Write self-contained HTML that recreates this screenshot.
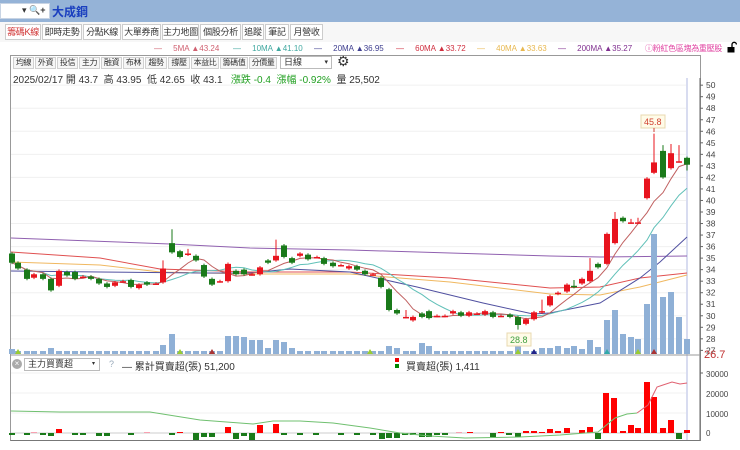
<!DOCTYPE html>
<html><head><meta charset="utf-8"><style>
*{margin:0;padding:0;box-sizing:border-box}
body{width:740px;height:450px;overflow:hidden;background:#fff;font-family:"Liberation Sans","Noto Sans CJK TC",sans-serif;position:relative;color:#333}
.a{position:absolute;white-space:nowrap}
.tab{position:absolute;top:24px;height:16px;border:1px solid #ccc;background:#fff;font-size:9px;line-height:14px;text-align:center;color:#333;white-space:nowrap;overflow:hidden;letter-spacing:-0.3px}
.btn{position:absolute;top:57px;height:12px;border:1px solid #d0d0d0;background:#f6f6f6;font-size:8px;line-height:10px;text-align:center;color:#333;white-space:nowrap;overflow:hidden;letter-spacing:-0.4px}
.lg{position:absolute;top:44px;font-size:8px;white-space:nowrap}
</style></head><body>
<div class="a" style="left:0;top:0;width:740px;height:22px;background:#95b3d7"></div>
<div class="a" style="left:0;top:3px;width:50px;height:16px;background:#fff;border:1px solid #c8d4e4"></div>
<div class="a" style="left:22px;top:5px;font-size:9px;color:#333">▾ <span style="color:#557">🔍</span><b>+</b></div>
<div class="a" style="left:52px;top:3px;font-size:12px;font-weight:bold;color:#1a3fbf">大成鋼</div>
<div class="a" style="left:0;top:22px;width:740px;height:20px;background:#f7f7f7"></div>
<div class="tab" style="left:5px;width:36px;color:#d03030">籌碼K線</div>
<div class="tab" style="left:42px;width:40px">即時走勢</div>
<div class="tab" style="left:83px;width:38px">分點K線</div>
<div class="tab" style="left:122px;width:39px">大單券商</div>
<div class="tab" style="left:162px;width:37px">主力地圖</div>
<div class="tab" style="left:200px;width:41px">個股分析</div>
<div class="tab" style="left:242px;width:22px">追蹤</div>
<div class="tab" style="left:265px;width:24px">筆記</div>
<div class="tab" style="left:290px;width:33px">月營收</div>
<div class="lg" style="left:154px;color:#d06070">—&nbsp;&nbsp;&nbsp;&nbsp; 5MA ▲43.24</div>
<div class="lg" style="left:233px;color:#40a8a0">—&nbsp;&nbsp;&nbsp;&nbsp; 10MA ▲41.10</div>
<div class="lg" style="left:314px;color:#404090">—&nbsp;&nbsp;&nbsp;&nbsp; 20MA ▲36.95</div>
<div class="lg" style="left:396px;color:#d03040">—&nbsp;&nbsp;&nbsp;&nbsp; 60MA ▲33.72</div>
<div class="lg" style="left:477px;color:#e8b850">—&nbsp;&nbsp;&nbsp;&nbsp; 40MA ▲33.63</div>
<div class="lg" style="left:558px;color:#803090">—&nbsp;&nbsp;&nbsp;&nbsp; 200MA ▲35.27</div>
<div class="a" style="left:645px;top:43px;font-size:8px;color:#e040a0;letter-spacing:-0.3px">ⓘ粉紅色區塊為重壓股</div>
<svg class="a" style="left:727px;top:41px" width="10" height="12" viewBox="0 0 10 12"><path d="M5 6V3.5a2.2 2.2 0 0 1 4.4 0" fill="none" stroke="#000" stroke-width="1.3"/><rect x="0.5" y="6" width="7" height="5.5" fill="#000"/></svg>
<div class="a" style="left:10px;top:55px;width:691px;height:386px;border:1px solid #999;border-bottom-color:#777"></div>
<div class="btn" style="left:13px;width:21px">均線</div>
<div class="btn" style="left:35px;width:21px">外資</div>
<div class="btn" style="left:57px;width:21px">投信</div>
<div class="btn" style="left:79px;width:21px">主力</div>
<div class="btn" style="left:101px;width:21px">融資</div>
<div class="btn" style="left:123px;width:21px">布林</div>
<div class="btn" style="left:145px;width:22px">趨勢</div>
<div class="btn" style="left:168px;width:22px">撐壓</div>
<div class="btn" style="left:191px;width:28px">本益比</div>
<div class="btn" style="left:220px;width:28px">籌碼值</div>
<div class="btn" style="left:249px;width:28px">分價量</div>
<div class="a" style="left:280px;top:56px;width:52px;height:13px;border:1px solid #bbb;background:#fff;font-size:9px;line-height:11px;padding-left:3px">日線<span style="position:absolute;right:3px;font-size:7px">▾</span></div>
<div class="a" style="left:337px;top:53px;font-size:14px;color:#333">⚙</div>
<div class="a" style="left:13px;top:71px;font-size:10px;color:#333">2025/02/17 開 43.7&nbsp; 高 43.95&nbsp; 低 42.65&nbsp; 收 43.1&nbsp;&nbsp; <span style="color:#22a022">漲跌 -0.4&nbsp; 漲幅 -0.92%</span>&nbsp; 量 25,502</div>
<svg class="a" style="left:0;top:0" width="740" height="450" id="s"></svg>
<div class="a" style="left:12px;top:359px;width:10px;height:10px;border-radius:50%;background:#aaa;color:#fff;font-size:8px;line-height:10px;text-align:center">×</div>
<div class="a" style="left:24px;top:358px;width:76px;height:13px;border:1px solid #bbb;font-size:9px;line-height:11px;padding-left:3px">主力買賣超<span style="position:absolute;right:4px;font-size:6px">▾</span></div>
<div class="a" style="left:109px;top:359px;font-size:9px;color:#9ab">?</div>
<div class="a" style="left:122px;top:358px;font-size:10px;color:#333">— 累計買賣超(張) 51,200</div>
<div class="a" style="left:395px;top:358px;width:4px;height:4px;background:#e00"></div>
<div class="a" style="left:395px;top:364px;width:4px;height:4px;background:#080"></div>
<div class="a" style="left:406px;top:358px;font-size:10px;color:#333">買賣超(張) 1,411</div>
<script>
var s=document.getElementById('s'),h='';
function Y(p){return 96.7+(49-p)*11.53}
function L(x1,y1,x2,y2,c,w){h+='<line x1="'+x1+'" y1="'+y1+'" x2="'+x2+'" y2="'+y2+'" stroke="'+c+'" stroke-width="'+(w||1)+'"/>'}
function R(x,y,w,hh,c){if(hh<0){y+=hh;hh=-hh}h+='<rect x="'+x+'" y="'+y+'" width="'+w+'" height="'+Math.max(hh,1)+'" fill="'+c+'"/>'}
function T(x,y,t,c,sz){h+='<text x="'+x+'" y="'+y+'" font-size="'+(sz||9)+'" fill="'+c+'" font-family="Liberation Sans">'+t+'</text>'}
function P(pts,c,w){h+='<polyline fill="none" stroke="'+c+'" stroke-width="'+(w||1)+'" points="'+pts.map(function(p){return p[0]+','+p[1]}).join(' ')+'"/>'}
for(var p=28;p<=50;p+=2)L(11,Y(p),686,Y(p),'#f0f0f0');
for(var y=373;y<=433;y+=20)L(11,y,686,y,'#f0f0f0');
L(687,78,687,440,'#d8dcf0',2);
L(700,78,700,440,'#666');
for(var p=27;p<=50;p++){L(700,Y(p),703,Y(p),'#666');T(706,Y(p)+3,p,'#444',8.5)}
T(704,358,'26.7','#c03030',11);
L(11,355,700,355,'#999');
L(700,373,703,373,'#666');
[[30000,374],[20000,394],[10000,414],[0,433]].forEach(function(a){T(706,a[1]+3,a[0],'#444',8)});
P([[11,238],[170,244],[250,248],[350,250],[450,253],[550,256],[600,257],[687,256]],'#9060b0');
P([[11,252],[100,258],[160,269],[250,272],[350,272],[450,278],[500,283],[550,288],[600,287],[640,278],[687,273]],'#e05050');
P([[11,262],[100,265],[160,272],[250,274],[350,274],[450,282],[500,288],[550,294],[600,295],[640,287],[687,275]],'#f0b860');
P([[11,271],[100,272],[200,273],[250,273],[290,269],[350,272],[417,287],[483,303],[533,314],[550,313],[600,303],[640,278],[660,262],[687,237]],'#5050a0');
var C=[
[12,35.4,34.6],[18,34.6,34.1],[27,34.0,33.2],[34,33.3,33.6],[43,33.6,33.2],[51,33.2,32.2],[59,32.6,33.9],[67,33.8,33.5],[75,33.8,33.2],[83,33.4,33.4],[91,33.4,33.2],[99,33.2,32.8],[107,32.8,32.5],[115,32.6,32.9],[123,33.0,33.0],[131,33.1,32.5],[139,32.4,32.7],[147,32.9,32.7],[156,32.8,32.8],
[163,32.9,34.1,34.8],[172,36.3,35.5,37.5],[180,35.6,35.1],[188,35.3,35.4,35.8],[196,35.2,34.8],[204,34.4,33.4],[212,33.2,32.7],[220,33.0,33.0],[228,33.0,34.5],[236,33.9,33.6],[244,34.0,33.6],[252,33.6,33.6],[260,33.6,34.2],[268,34.8,34.6],[276,34.8,35.2,36.6],[284,36.1,35.1],[292,35.0,34.6],
[300,35.2,35.4],[308,35.3,34.9],[317,35.1,35.1],[324,35.0,34.5],[333,34.6,34.3],[341,34.4,34.4],[349,34.1,34.3],[357,34.3,34.0],[365,33.9,33.6],[373,33.6,33.6],[381,33.3,32.5],[389,32.3,30.5],[397,30.5,30.2],[406,29.9,29.9,30.5],[413,29.6,29.9],[422,30.2,29.9],[429,30.4,29.8],[437,30.0,30.0],[445,30.0,30.0],[453,30.2,30.4],[461,30.3,30.0],[469,30.0,30.3],[477,30.2,30.2],[485,30.1,30.4],[493,30.3,29.9],[501,30.0,30.0],[510,30.1,29.9],[518,29.9,29.2,30.0,28.8],[526,29.3,29.7],[534,29.7,30.3],[542,30.3,30.4,31.4],[550,30.9,31.7],[558,31.9,32.0],[567,32.1,32.7],[574,32.6,32.5,33.1],[582,32.8,33.2],[590,33.0,33.9,35],[598,34.5,34.2],[607,34.5,37.1],[615,36.3,38.4,39],[623,38.5,38.2],[631,38.1,38.1,38.4],[638,38.1,38.1,38.5],[647,40.2,41.9],[654,42.4,43.3,45.8],[663,44.3,42.0,44.8],[671,42.8,44.1,44.9],[679,43.4,43.4,44.8],[687,43.7,43.1,43.8,42.6]];
var V={12:5,51:6,107:3,163:9,172:20,228:18,236:18,244:17,252:14,260:14,268:6,276:14,284:12,292:6,389:8,397:6,422:11,429:8,518:14,534:3,542:6,550:6,558:8,567:6,574:8,582:5,590:14,598:7,607:34,615:44,623:20,631:17,638:15,647:50,654:120,663:57,671:62,679:37,687:15};
C.forEach(function(c){var v=V[c[0]]||3;R(c[0]-3,354-v,6,v,'#8fb0d6')});
[[18,'#9c3'],[180,'#9c3'],[212,'#a33'],[370,'#9c3'],[518,'#9c3'],[534,'#228'],[607,'#3aa'],[638,'#9c3'],[654,'#a33']].forEach(function(m){h+='<polygon points="'+(m[0]-3)+',354 '+(m[0]+3)+',354 '+m[0]+',349" fill="'+m[1]+'"/>'});
var cl=C.map(function(c){return c[2]});
function ma(n,col){var pts=[];for(var i=0;i<cl.length;i++){var a=0,k=0;for(var j=Math.max(0,i-n+1);j<=i;j++){a+=cl[j];k++}pts.push([C[i][0],Y(a/k).toFixed(1)])}P(pts,col)}
ma(10,'#60c0b8');ma(5,'#c06060');
C.forEach(function(c){var x=c[0],o=c[1],cc=c[2],up=cc>=o,col=up?'#e8141e':'#1a7a1a';
var hi=c[3]||Math.max(o,cc)+0.12,lo=c[4]||Math.min(o,cc)-0.12;
L(x,Y(hi),x,Y(lo),col);R(x-3,Y(Math.max(o,cc)),6,Math.max(Y(Math.min(o,cc))-Y(Math.max(o,cc)),1.5),col)});
h+='<rect x="641" y="115" width="24" height="13" fill="#fffbe8" stroke="#e8d8b0"/>';T(644,125,'45.8','#d04030',9);L(654,128,654,132,'#d04030');
h+='<rect x="507" y="333" width="24" height="13" fill="#fffbe8" stroke="#e8d8b0"/>';T(510,343,'28.8','#40a040',9);
L(11,433,686,433,'#ccc');
var B=[[12,-2],[27,-2],[34,1,'#f8a0b0'],[43,-2],[51,-3],[59,4],[75,-2],[83,-2],[99,-3],[107,-3],[131,-2],[147,1,'#f8a0b0'],[172,-2],[180,1],[196,-7],[204,-4],[212,-4],[228,6],[236,-6],[244,-3],[252,-7],[260,8],[276,9],[284,-2],[300,-2],[316,-2],[341,-2],[357,-2],[373,-2],[382,-6],[389,-5],[397,-5],[405,-2],[413,-2],[422,-4],[429,-4],[437,-2],[445,-2],[459,1,'#f8a0b0'],[470,1],[493,-4],[501,1],[509,-2],[518,-4],[526,2],[534,2],[542,1],[550,4],[558,2],[567,5],[582,3],[590,6],[598,-6],[606,40],[614,35],[623,2],[631,8],[638,5],[647,51],[654,36],[663,5],[671,13],[679,-6],[687,3]];
B.forEach(function(b){R(b[0]-3,433,6,-b[1],b[2]||(b[1]>0?'#f00':'#1a7a1a'))});
P([[11,411],[60,412],[150,412],[200,420],[253,424],[273,421],[300,421],[333,423],[370,428],[400,433],[430,436],[465,438],[520,437],[560,435],[598,432],[615,418],[627,414],[637,413]],'#70c070');
P([[637,413],[648,405],[657,387],[663,385],[672,382],[680,384],[687,383]],'#e06070');
s.innerHTML=h;
</script>
</body></html>
